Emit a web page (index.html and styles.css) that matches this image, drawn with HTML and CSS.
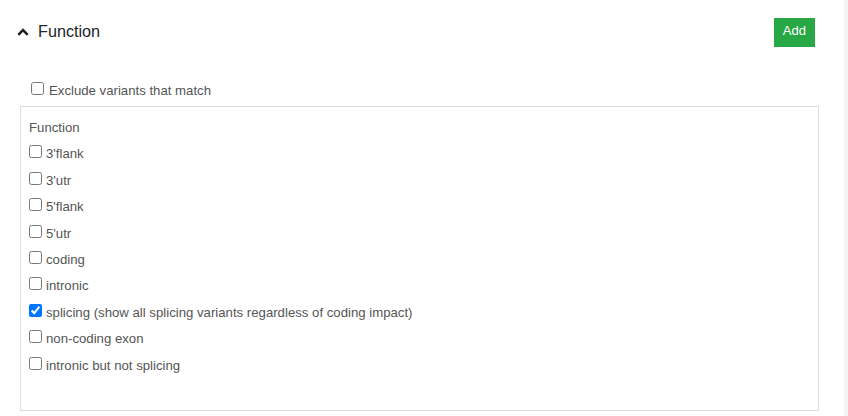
FILE: index.html
```html
<!DOCTYPE html>
<html>
<head>
<meta charset="utf-8">
<link rel="stylesheet" href="styles.css">
</head>
<body>
<div class="page">
  <div class="main">
    <div class="hdr">
      <div class="toggle">
        <svg class="chev" width="12" height="8" viewBox="0 0 12 8"><polyline points="1.3,6.8 6,2.1 10.7,6.8" fill="none" stroke="#1f2327" stroke-width="2.6" stroke-linecap="butt" stroke-linejoin="miter"/></svg>
        <span class="title">Function</span>
      </div>
      <button class="add">Add</button>
    </div>
    <label class="row exclude"><input type="checkbox"><span>Exclude variants that match</span></label>
    <div class="box">
      <div class="row label">Function</div>
      <label class="row"><input type="checkbox"><span>3'flank</span></label>
      <label class="row"><input type="checkbox"><span>3'utr</span></label>
      <label class="row"><input type="checkbox"><span>5'flank</span></label>
      <label class="row"><input type="checkbox"><span>5'utr</span></label>
      <label class="row"><input type="checkbox"><span>coding</span></label>
      <label class="row"><input type="checkbox"><span>intronic</span></label>
      <label class="row"><input type="checkbox" checked><span>splicing (show all splicing variants regardless of coding impact)</span></label>
      <label class="row"><input type="checkbox"><span>non-coding exon</span></label>
      <label class="row"><input type="checkbox"><span>intronic but not splicing</span></label>
    </div>
  </div>
  <div class="strip"></div>
</div>
</body>
</html>
```
FILE: styles.css
```css
html, body {
  margin: 0;
  padding: 0;
  background: #fff;
  font-family: "Liberation Sans", Arial, sans-serif;
}
.page {
  display: flex;
  width: 848px;
  height: 416px;
  overflow: hidden;
}
.main {
  width: 844px;
  flex: none;
}
.strip {
  width: 4px;
  flex: none;
  background: #f4f4f4;
}
.hdr {
  margin-top: 18px;
  height: 29px;
  padding: 0 29px 0 17px;
  display: flex;
  align-items: center;
  justify-content: space-between;
}
.toggle {
  display: flex;
  align-items: center;
  gap: 9px;
  margin-bottom: 3px;
}
.chev {
  display: block;
  margin-top: 1px;
}
.title {
  font-size: 16.2px;
  color: #212529;
}
.add {
  height: 29px;
  box-sizing: border-box;
  padding: 0 9px 4px;
  line-height: 25px;
  font-family: "Liberation Sans", Arial, sans-serif;
  font-size: 13px;
  color: #fff;
  background: #28a745;
  border: none;
  border-radius: 0;
}
.row {
  display: flex;
  align-items: center;
  height: 26.4px;
  gap: 4px;
  font-size: 13.2px;
  color: #555;
}
.row input {
  margin: 0 0 4px 0;
  width: 13px;
  height: 13px;
}
.exclude {
  margin-top: 30.6px;
  padding-left: 31px;
  gap: 5px;
}
.box {
  margin: 2px 25px 0 20px;
  height: 305px;
  box-sizing: border-box;
  border: 1px solid #ddd;
  padding: 7.4px 0 0 8px;
}
```
